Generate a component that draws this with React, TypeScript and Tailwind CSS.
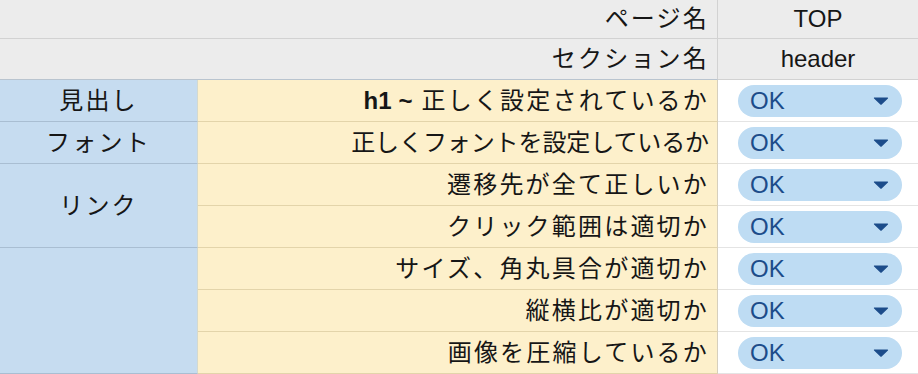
import type { ReactNode } from 'react'

const FONT = "font-['Liberation_Sans','Noto_Sans_CJK_JP',sans-serif]"

const CHECKS: { label: ReactNode; tight?: boolean }[] = [
  {
    label: (
      <>
        <span className="mr-[7px] font-bold tracking-normal">h1</span>
        <span className="mr-[9px] font-bold tracking-normal">~</span>
        正しく設定されているか
      </>
    ),
  },
  { label: '正しくフォントを設定しているか', tight: true },
  { label: '遷移先が全て正しいか' },
  { label: 'クリック範囲は適切か' },
  { label: 'サイズ、角丸具合が適切か' },
  { label: '縦横比が適切か' },
  { label: '画像を圧縮しているか' },
]

function StatusChip() {
  return (
    <div className="flex h-[32px] w-[164px] items-center justify-between rounded-full bg-[#bedcf3] pl-3 pr-[13px]">
      <span className="text-[24px] leading-none tracking-normal text-[#1c4c8a]">OK</span>
      <svg width="16" height="8" viewBox="0 0 16 8" className="mt-px">
        <path d="M1.5 1h13L8 7.2z" fill="#1c4c8a" stroke="#1c4c8a" strokeWidth="1.2" strokeLinejoin="round" />
      </svg>
    </div>
  )
}

function CheckRow({ label, tight }: { label: ReactNode; tight?: boolean }) {
  return (
    <>
      <div
        className={`flex items-center justify-end border-b border-r border-b-[#e3d4aa] border-r-[#d6cfbd] bg-[#fdf0cb] pr-2 ${tight ? 'tracking-[-0.1px]' : ''}`}
      >
        {label}
      </div>
      <div className="flex items-center border-b border-[#e4e4e4] bg-white pl-5">
        <StatusChip />
      </div>
    </>
  )
}

export default function App() {
  const blueCell =
    'flex items-center justify-center border-b border-r border-b-[#a9bed2] border-r-[#d3d9cf] bg-[#c6dcf0]'

  return (
    <div
      className={`grid h-[374px] w-[918px] grid-cols-[198px_520px_200px] grid-rows-[39px_41px_repeat(7,42px)] overflow-hidden bg-white text-[24px] leading-none tracking-[2.2px] text-[#161616] ${FONT}`}
    >
      <div className="col-span-2 flex items-center justify-end border-b border-r border-[#d2d2d2] bg-[#ececec] pr-2">
        ページ名
      </div>
      <div className="flex items-center justify-center border-b border-[#d2d2d2] bg-[#ececec] tracking-normal">
        TOP
      </div>
      <div className="col-span-2 flex items-center justify-end border-b border-r border-[#d2d2d2] border-b-[#b9c4cf] bg-[#ececec] pr-2">
        セクション名
      </div>
      <div className="flex items-center justify-center border-b border-[#d2d2d2] bg-[#ececec] tracking-normal">
        header
      </div>

      <div className={blueCell}>見出し</div>
      <CheckRow {...CHECKS[0]} />

      <div className={blueCell}>フォント</div>
      <CheckRow {...CHECKS[1]} />

      <div className={`${blueCell} row-span-2`}>リンク</div>
      <CheckRow {...CHECKS[2]} />
      <CheckRow {...CHECKS[3]} />

      <div className={`${blueCell} row-span-3`} />
      <CheckRow {...CHECKS[4]} />
      <CheckRow {...CHECKS[5]} />
      <CheckRow {...CHECKS[6]} />
    </div>
  )
}
